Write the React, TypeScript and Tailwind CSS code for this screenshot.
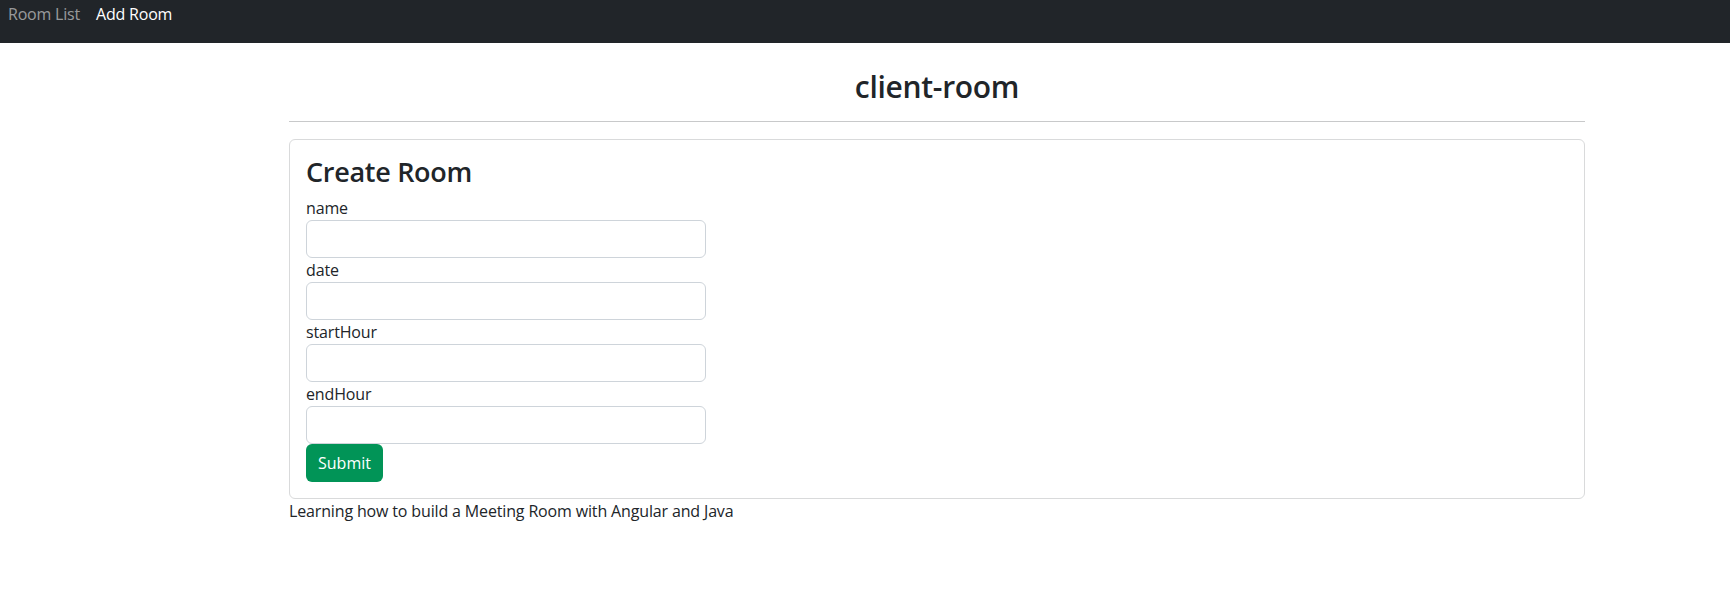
import React from "react";

const font = { fontFamily: '"Open Sans", "Noto Sans", sans-serif' };

function Field({ label }: { label: string }) {
  return (
    <div className="flex flex-col">
      <label className="h-6 leading-6 text-[16px] tracking-[-0.15px]">{label}</label>
      <input className="h-[38px] w-[400px] rounded-[6px] border border-[#ced4da] bg-white px-3 outline-none" />
    </div>
  );
}

export default function App() {
  return (
    <div className="min-h-[606px] bg-white text-[#212529]" style={font}>
      <nav className="flex h-[43px] items-start bg-[#212529] pl-0">
        <div className="flex h-6 items-center pt-[4px] text-[16px] leading-6 tracking-[-0.2px]">
          <a className="px-2 text-[rgba(255,255,255,0.55)]">Room List</a>
          <a className="px-2 text-white">Add Room</a>
        </div>
      </nav>
      <div className="ml-[289px] w-[1296px]">
        <h1 className="mt-[27px] h-[34px] text-center text-[30px] font-semibold leading-[34px] tracking-[-0.3px]">
          client-room
        </h1>
        <hr className="mt-[17px] mb-[17px] border-t border-[#c8c9ca]" />
        <div className="rounded-[6px] border border-[#d9dadb] p-4">
          <h3 className="mb-2 h-[32px] text-[27px] font-semibold leading-[32px] tracking-[-0.3px]">Create Room</h3>
          <form className="flex flex-col" onSubmit={(e) => e.preventDefault()}>
            <Field label="name" />
            <Field label="date" />
            <Field label="startHour" />
            <Field label="endHour" />
            <div>
              <button
                type="submit"
                className="h-[38px] w-[77px] rounded-[6px] bg-[#019457] text-[16px] text-white"
              >
                Submit
              </button>
            </div>
          </form>
        </div>
        <p className="h-6 text-[16px] leading-6 tracking-[-0.15px]">
          Learning how to build a Meeting Room with Angular and Java
        </p>
      </div>
    </div>
  );
}
